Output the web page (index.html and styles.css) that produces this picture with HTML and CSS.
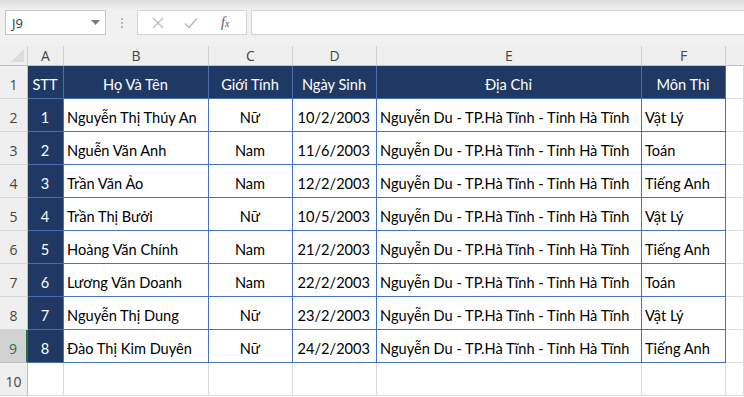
FILE: index.html
```html
<!DOCTYPE html>
<html lang="vi">
<head>
<meta charset="utf-8">
<link rel="stylesheet" href="styles.css">
</head>
<body>
<div class="topbar">
  <div class="namebox"><span class="nb-text">J9</span><svg class="nb-arrow" width="9" height="5" viewBox="0 0 9 5"><path d="M0 0h9L4.5 5z" fill="#7a7a7a"/></svg></div>
  <div class="grip"><i></i><i></i><i></i></div>
  <div class="fxbox">
    <svg class="ic" width="12" height="12" viewBox="0 0 12 12"><path d="M1 1l10 10M11 1L1 11" stroke="#bdbdbd" stroke-width="1.3" fill="none"/></svg>
    <svg class="ic" width="14" height="12" viewBox="0 0 14 12"><path d="M1 6.5l4 4L13 1.5" stroke="#bdbdbd" stroke-width="1.6" fill="none"/></svg>
    <span class="fx">f<sub>x</sub></span>
  </div>
  <div class="input"></div>
</div>
<div class="sheet">
  <div class="corner"><span class="tri"></span></div>
  <div class="ch">A</div><div class="ch">B</div><div class="ch">C</div><div class="ch">D</div><div class="ch">E</div><div class="ch">F</div><div class="ch last"></div>

  <div class="rh">1</div>
  <div class="c hd">STT</div><div class="c hd">Họ Và Tên</div><div class="c hd">Giới Tính</div><div class="c hd">Ngày Sinh</div><div class="c hd">Địa Chỉ</div><div class="c hd">Môn Thi</div><div class="g"></div>

  <div class="rh">2</div>
  <div class="c num">1</div><div class="c l">Nguyễn Thị Thúy An</div><div class="c m">Nữ</div><div class="c r">10/2/2003</div><div class="c l">Nguyễn Du - TP.Hà Tĩnh - Tỉnh Hà Tĩnh</div><div class="c l">Vật Lý</div><div class="g"></div>

  <div class="rh">3</div>
  <div class="c num">2</div><div class="c l">Nguễn Văn Anh</div><div class="c m">Nam</div><div class="c r">11/6/2003</div><div class="c l">Nguyễn Du - TP.Hà Tĩnh - Tỉnh Hà Tĩnh</div><div class="c l">Toán</div><div class="g"></div>

  <div class="rh">4</div>
  <div class="c num">3</div><div class="c l">Trần Văn Ảo</div><div class="c m">Nam</div><div class="c r">12/2/2003</div><div class="c l">Nguyễn Du - TP.Hà Tĩnh - Tỉnh Hà Tĩnh</div><div class="c l">Tiếng Anh</div><div class="g"></div>

  <div class="rh">5</div>
  <div class="c num">4</div><div class="c l">Trần Thị Bưởi</div><div class="c m">Nữ</div><div class="c r">10/5/2003</div><div class="c l">Nguyễn Du - TP.Hà Tĩnh - Tỉnh Hà Tĩnh</div><div class="c l">Vật Lý</div><div class="g"></div>

  <div class="rh">6</div>
  <div class="c num">5</div><div class="c l">Hoàng Văn Chính</div><div class="c m">Nam</div><div class="c r">21/2/2003</div><div class="c l">Nguyễn Du - TP.Hà Tĩnh - Tỉnh Hà Tĩnh</div><div class="c l">Tiếng Anh</div><div class="g"></div>

  <div class="rh">7</div>
  <div class="c num">6</div><div class="c l">Lương Văn Doanh</div><div class="c m">Nam</div><div class="c r">22/2/2003</div><div class="c l">Nguyễn Du - TP.Hà Tĩnh - Tỉnh Hà Tĩnh</div><div class="c l">Toán</div><div class="g"></div>

  <div class="rh">8</div>
  <div class="c num">7</div><div class="c l">Nguyễn Thị Dung</div><div class="c m">Nữ</div><div class="c r">23/2/2003</div><div class="c l">Nguyễn Du - TP.Hà Tĩnh - Tỉnh Hà Tĩnh</div><div class="c l">Vật Lý</div><div class="g"></div>

  <div class="rh sel">9</div>
  <div class="c num">8</div><div class="c l">Đào Thị Kim Duyên</div><div class="c m">Nữ</div><div class="c r">24/2/2003</div><div class="c l">Nguyễn Du - TP.Hà Tĩnh - Tỉnh Hà Tĩnh</div><div class="c l">Tiếng Anh</div><div class="g"></div>

  <div class="rh">10</div>
  <div class="g"></div><div class="g"></div><div class="g"></div><div class="g"></div><div class="g"></div><div class="g"></div><div class="g"></div>
</div>
</body>
</html>
```
FILE: styles.css
```css
* { box-sizing: border-box; }
html, body { margin: 0; padding: 0; }
body {
  width: 744px;
  height: 397px;
  overflow: hidden;
  background: #ffffff;
  font-family: Lato, "Open Sans", sans-serif;
  color: #000;
}
.topbar {
  height: 46px;
  background: linear-gradient(#dedede 0px, #ececec 8px, #f1f1f1 10px, #f1f1f1 100%);
  display: flex;
  align-items: flex-start;
  padding-top: 10px;
  padding-left: 5px;
}
.namebox {
  width: 101px;
  height: 25px;
  background: #fff;
  border: 1px solid #c6c6c6;
  display: flex;
  align-items: center;
  padding: 0 5px 0 6px;
  justify-content: space-between;
}
.nb-text { font-size: 13px; color: #333; font-family: "Open Sans", sans-serif; }
.grip {
  width: 31px;
  height: 25px;
  display: flex;
  flex-direction: column;
  align-items: center;
  justify-content: center;
  gap: 2px;
}
.grip i { width: 2px; height: 2px; background: #b5b5b5; display: block; }
.fxbox {
  width: 110px;
  height: 25px;
  background: #fff;
  border: 1px solid #d4d4d4;
  display: flex;
  align-items: center;
  padding: 0 10px 0 14px;
  gap: 19px;
}
.fxbox .ic:nth-child(2) { margin-left: 1px; }
.fx {
  font-family: "Liberation Serif", serif;
  font-style: italic;
  font-size: 14px;
  color: #555;
  margin-left: 4px;
}
.fx sub { font-size: 10px; vertical-align: 0; }
.input {
  flex: 1;
  margin-left: 4px;
  height: 25px;
  background: #fff;
  border: 1px solid #d4d4d4;
  border-right: none;
}
.sheet {
  display: grid;
  grid-template-columns: 28px 36px 145px 84px 84px 265px 84px 1fr;
  grid-template-rows: 20px repeat(10, 33px);
}
.corner {
  background: #efefef;
  border-right: 1px solid #d0d0d0;
  border-bottom: 1px solid #c0c0c0;
  position: relative;
}
.tri {
  position: absolute;
  right: 3px;
  bottom: 3px;
  width: 0;
  height: 0;
  border-left: 13px solid transparent;
  border-bottom: 13px solid #dcdcdc;
}
.ch {
  background: #efefef;
  border-right: 1px solid #d0d0d0;
  border-bottom: 1px solid #c0c0c0;
  display: flex;
  align-items: center;
  justify-content: center;
  font-family: "Open Sans", sans-serif;
  font-size: 14px;
  color: #444;
}
.ch.last { border-right: none; }
.rh {
  background: #efefef;
  border-right: 1px solid #c0c0c0;
  border-bottom: 1px solid #d5d5d5;
  display: flex;
  align-items: flex-end;
  justify-content: center;
  padding-bottom: 4px;
  font-family: "Open Sans", sans-serif;
  font-size: 14px;
  color: #444;
}
.rh.sel {
  background: #d2d2d2;
  color: #217346;
  border-right: 2px solid #217346;
  border-bottom-color: #c0c0c0;
}
.c {
  border-right: 1px solid #4472c4;
  border-bottom: 1px solid #4472c4;
  display: flex;
  align-items: flex-end;
  padding: 0 4px 5px 3px;
  font-size: 14.6px;
  white-space: nowrap;
  overflow: hidden;
}
.hd {
  background: #203864;
  color: #fff;
  justify-content: center;
  border-right-color: #4a6db0;
  border-bottom-color: #4a6db0;
}
.num {
  background: #203864;
  color: #fff;
  justify-content: center;
  border-bottom-color: #4a6db0;
}
.l { justify-content: flex-start; }
.m { justify-content: center; }
.r { justify-content: flex-end; padding-right: 6px; }
.g {
  border-right: 1px solid #dadada;
  border-bottom: 1px solid #dadada;
}
```
